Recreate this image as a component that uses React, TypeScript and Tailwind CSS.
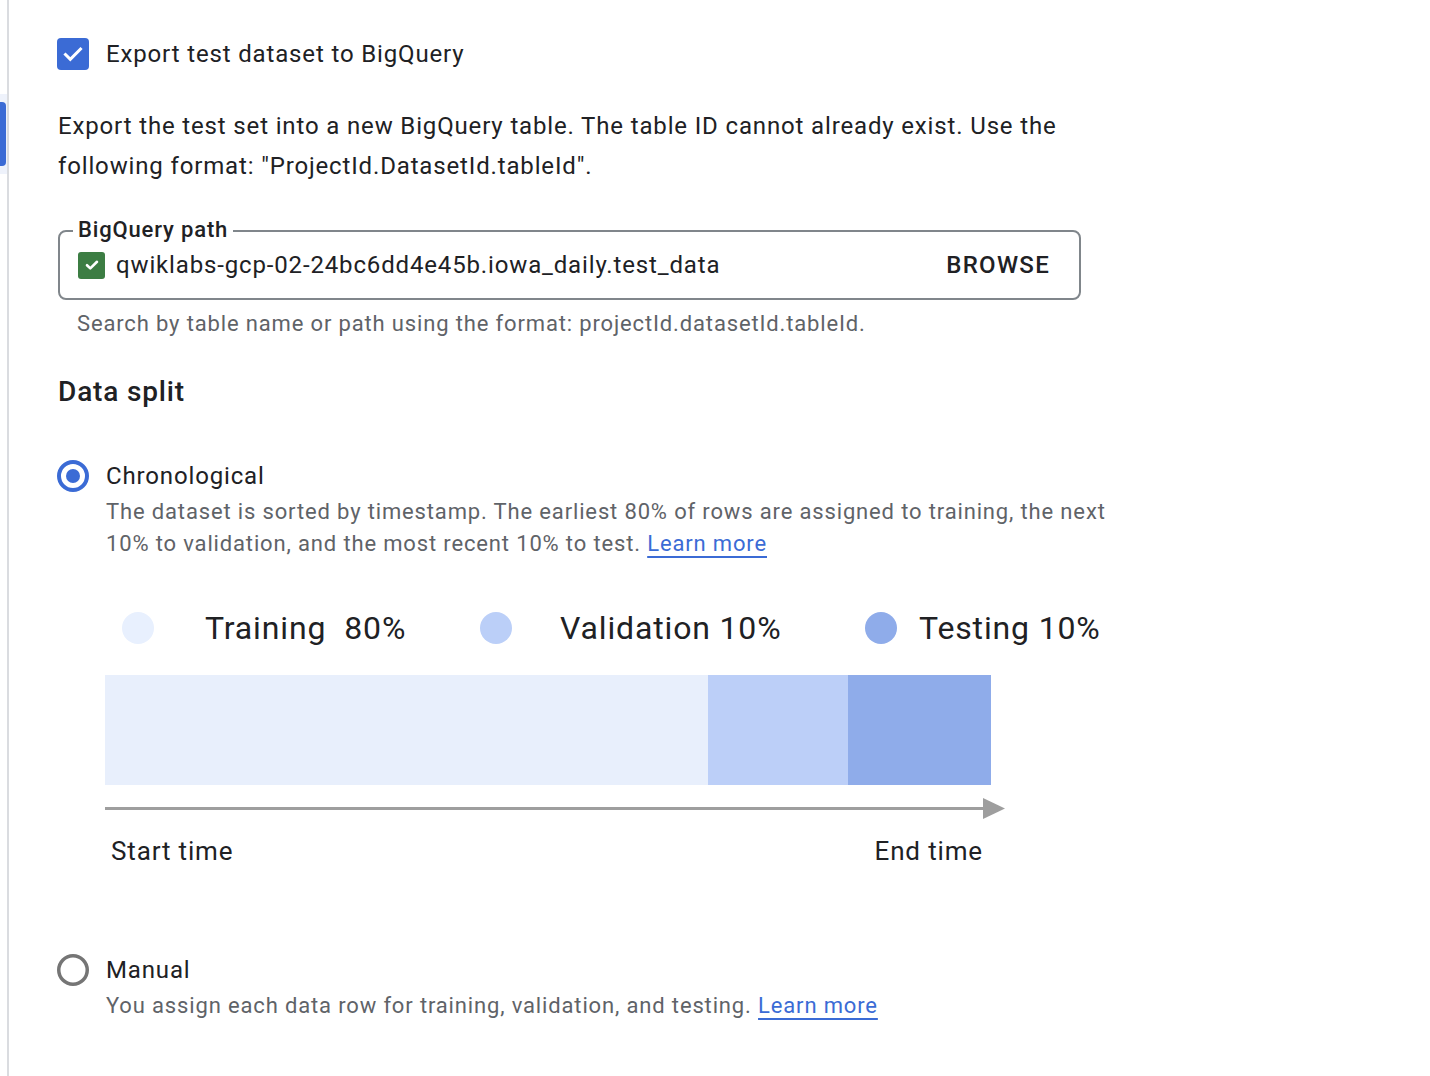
import React from "react";

const font = { fontFamily: "Roboto, 'Noto Sans', Arial, sans-serif" };

function Radio({ checked }: { checked: boolean }) {
  return (
    <svg width="32" height="32" viewBox="0 0 32 32" className="shrink-0">
      {checked ? (
        <>
          <circle cx="16" cy="16" r="14" fill="none" stroke="#3b6bd5" strokeWidth="4" />
          <circle cx="16" cy="16" r="7" fill="#3b6bd5" />
        </>
      ) : (
        <circle cx="16" cy="16" r="14.25" fill="none" stroke="#757575" strokeWidth="3.5" />
      )}
    </svg>
  );
}

export default function App() {
  return (
    <div className="w-[1430px] h-[1076px] bg-white flex overflow-hidden text-[#202124] tracking-[0.85px]" style={font}>
      {/* left rail */}
      <div className="w-[9px] shrink-0 border-r-2 border-[#dadce0] flex flex-col">
        <div className="mt-[94px] h-[80px] bg-[#eef2fb] py-[8px]">
          <div className="h-[64px] w-[6px] bg-[#3b6bd5] rounded-r-[4px]" />
        </div>
      </div>

      <div className="pl-[48px] pt-[38px] flex flex-col">
        {/* Export checkbox */}
        <div className="flex items-center gap-[17px] h-[32px]">
          <div className="w-[32px] h-[32px] rounded-[4px] bg-[#3b6bd5] flex items-center justify-center">
            <svg width="24" height="24" viewBox="0 0 24 24">
              <path d="M4.5 12.5l4.8 4.8L19.5 7" fill="none" stroke="white" strokeWidth="3" strokeLinecap="square" />
            </svg>
          </div>
          <span className="text-[24px] leading-[32px]">Export test dataset to BigQuery</span>
        </div>

        <p className="mt-[36px] ml-px text-[24px] leading-[40px] w-[1060px]">
          Export the test set into a new BigQuery table. The table ID cannot already exist. Use the
          <br />
          following format: "ProjectId.DatasetId.tableId".
        </p>

        {/* BigQuery path field */}
        <div className="relative mt-[44px] ml-px w-[1023px] h-[70px] border-2 border-[#80868b] rounded-[8px] flex items-center pl-[18px] pr-[29px]">
          <span className="absolute left-[13px] top-[-15px] bg-white px-[5px] text-[22px] leading-[26px] font-medium">
            BigQuery path
          </span>
          <div className="w-[27px] h-[27px] rounded-[3px] bg-[#3c7d43] flex items-center justify-center shrink-0">
            <svg width="18" height="18" viewBox="0 0 18 18">
              <path d="M4 9.2l3.3 3.2L14 5.8" fill="none" stroke="white" strokeWidth="2.6" strokeLinecap="round" strokeLinejoin="round" />
            </svg>
          </div>
          <span className="ml-[11px] text-[24px] leading-[32px]">qwiklabs-gcp-02-24bc6dd4e45b.iowa_daily.test_data</span>
          <span className="ml-auto text-[24px] leading-[32px] font-medium tracking-[1.3px]">BROWSE</span>
        </div>

        <p className="mt-[11px] ml-[20px] text-[22px] leading-[26px] text-[#5f6368]">
          Search by table name or path using the format: projectId.datasetId.tableId.
        </p>

        <h2 className="mt-[37px] ml-px text-[28px] leading-[36px] font-medium">Data split</h2>

        {/* Chronological */}
        <div className="mt-[50px] flex gap-[17px]">
          <Radio checked />
          <div className="flex flex-col">
            <span className="text-[24px] leading-[32px]">Chronological</span>
            <p className="mt-[4px] text-[22px] leading-[32px] text-[#5f6368] w-[1080px]">
              The dataset is sorted by timestamp. The earliest 80% of rows are assigned to training, the next
              <br />
              10% to validation, and the most recent 10% to test.{" "}
              <a className="text-[#3b6bd5] underline decoration-2 underline-offset-[5px]" href="#">Learn more</a>
            </p>

            {/* legend */}
            <div className="mt-[48px] h-[40px] flex items-center pl-[16px] text-[32px] leading-[40px] text-[#202124]">
              <div className="w-[358px] flex items-center">
                <span className="w-[32px] h-[32px] rounded-full bg-[#e8f0fe]" />
                <span className="ml-[51px]">Training</span>
                <span className="ml-[18px]">80%</span>
              </div>
              <div className="w-[385px] flex items-center">
                <span className="w-[32px] h-[32px] rounded-full bg-[#bbcff8]" />
                <span className="ml-[48px]">Validation 10%</span>
              </div>
              <div className="flex items-center">
                <span className="w-[32px] h-[32px] rounded-full bg-[#8facea]" />
                <span className="ml-[22px]">Testing 10%</span>
              </div>
            </div>

            {/* bar */}
            <div className="mt-[27px] -ml-px flex h-[110px] w-[886px]">
              <div className="w-[603px] bg-[#e8effc]" />
              <div className="w-[140px] bg-[#bccff8]" />
              <div className="w-[143px] bg-[#8facea]" />
            </div>

            {/* arrow */}
            <svg className="mt-[12px] -ml-px" width="902" height="24" viewBox="0 0 902 24">
              <line x1="0" y1="11.5" x2="880" y2="11.5" stroke="#9e9e9e" strokeWidth="3" />
              <polygon points="878,1 900,11.5 878,22" fill="#9e9e9e" />
            </svg>

            <div className="mt-[14px] w-[877px] pl-[5px] flex justify-between text-[26px] leading-[32px] text-[#202124]">
              <span>Start time</span>
              <span>End time</span>
            </div>
          </div>
        </div>

        {/* Manual */}
        <div className="mt-[87px] flex gap-[17px]">
          <Radio checked={false} />
          <div className="flex flex-col">
            <span className="text-[24px] leading-[32px]">Manual</span>
            <p className="mt-[4px] text-[22px] leading-[32px] text-[#5f6368]">
              You assign each data row for training, validation, and testing.{" "}
              <a className="text-[#3b6bd5] underline decoration-2 underline-offset-[5px]" href="#">Learn more</a>
            </p>
          </div>
        </div>
      </div>
    </div>
  );
}
